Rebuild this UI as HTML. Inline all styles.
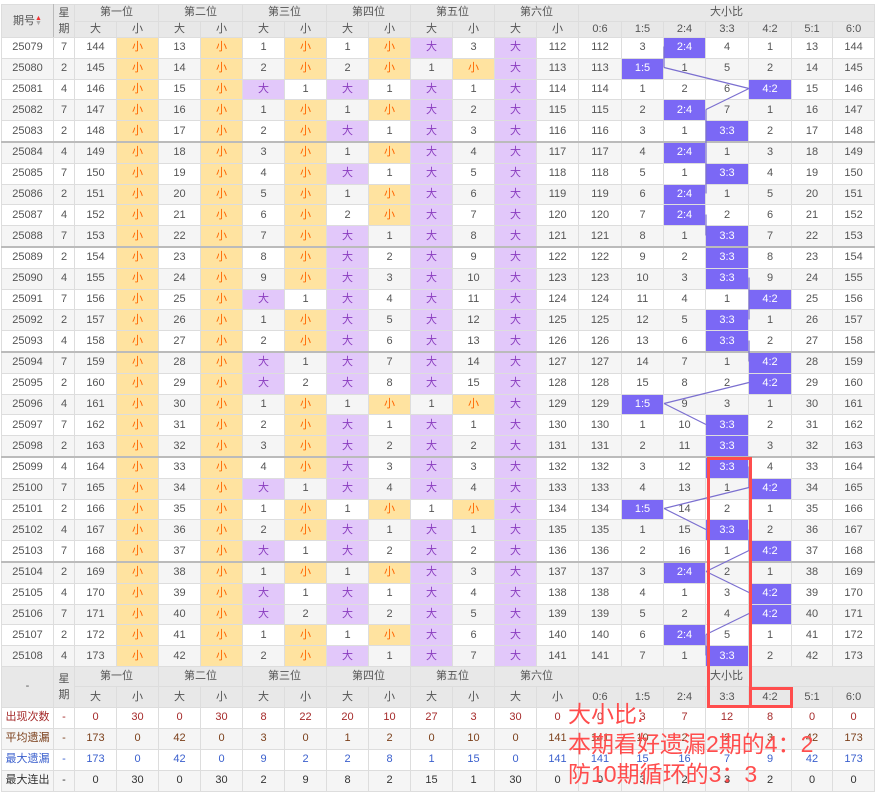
<!DOCTYPE html>
<html><head><meta charset="utf-8">
<style>
html,body{margin:0;padding:0;background:#fff;width:876px;height:794px;overflow:hidden}
body{font-family:"Liberation Sans","Noto Sans CJK SC",sans-serif;font-size:11px;color:#555;position:relative}
table{position:absolute;left:1px;top:4px;border-collapse:collapse;table-layout:fixed;width:874px}
td,th{padding:0;text-align:center;border:1px solid #ddd;height:19.8px;line-height:19px;white-space:nowrap;overflow:hidden;font-weight:normal}
th{background:#e8e8e8;color:#555;height:15px;line-height:15px}
tr.h1 th{height:14px}
tbody tr:nth-child(even) td{background:#f5f5f5}
tbody tr td{background:#fff}
tr.g td{border-top:2px solid #bbb}
td.s{background:#ffe3a0 !important;color:#f60}
td.b{background:#e2c8fa !important;color:#8a3cbf}
td.r{background:#7b68f5 !important;color:#fff}
.L{border-left:1px solid #bbb}
.ft th{height:19.5px;line-height:19px}
.st td{height:20px}
.c1{color:#a52a2a}.c2{color:#7b3f1a}.c3{color:#3a5fcd}.c4{color:#333}
.ann{position:absolute;left:568px;color:#ff4d4d;font-size:23px;line-height:30px;font-family:"Liberation Sans","Noto Sans CJK SC",sans-serif}
</style></head><body>
<table>
<colgroup><col style="width:52px"><col style="width:21px"><col style="width:42px"><col style="width:42px"><col style="width:42px"><col style="width:42px"><col style="width:42px"><col style="width:42px"><col style="width:42px"><col style="width:42px"><col style="width:42px"><col style="width:42px"><col style="width:42px"><col style="width:42px"><col style="width:43px"><col style="width:42px"><col style="width:42px"><col style="width:43px"><col style="width:43px"><col style="width:41px"><col style="width:42px"></colgroup>
<thead>
<tr class="h1"><th rowspan="2" style="border-right:1px solid #bbb">期号<span style="font-size:7px;display:inline-block;line-height:5px;vertical-align:middle"><span style="color:#e33">▲</span><br><span style="color:#aaa">▼</span></span></th><th rowspan="2" style="line-height:16px">星<br>期</th><th colspan="2" class="L">第一位</th><th colspan="2" class="L">第二位</th><th colspan="2" class="L">第三位</th><th colspan="2" class="L">第四位</th><th colspan="2" class="L">第五位</th><th colspan="2" class="L">第六位</th><th colspan="7" class="L">大小比</th></tr>
<tr><th class="L">大</th><th>小</th><th class="L">大</th><th>小</th><th class="L">大</th><th>小</th><th class="L">大</th><th>小</th><th class="L">大</th><th>小</th><th class="L">大</th><th>小</th><th class="L">0:6</th><th>1:5</th><th>2:4</th><th>3:3</th><th>4:2</th><th>5:1</th><th>6:0</th></tr>
</thead>
<tbody>
<tr><td>25079</td><td>7</td><td>144</td><td class="s">小</td><td>13</td><td class="s">小</td><td>1</td><td class="s">小</td><td>1</td><td class="s">小</td><td class="b">大</td><td>3</td><td class="b">大</td><td>112</td><td>112</td><td>3</td><td class="r">2:4</td><td>4</td><td>1</td><td>13</td><td>144</td></tr>
<tr><td>25080</td><td>2</td><td>145</td><td class="s">小</td><td>14</td><td class="s">小</td><td>2</td><td class="s">小</td><td>2</td><td class="s">小</td><td>1</td><td class="s">小</td><td class="b">大</td><td>113</td><td>113</td><td class="r">1:5</td><td>1</td><td>5</td><td>2</td><td>14</td><td>145</td></tr>
<tr><td>25081</td><td>4</td><td>146</td><td class="s">小</td><td>15</td><td class="s">小</td><td class="b">大</td><td>1</td><td class="b">大</td><td>1</td><td class="b">大</td><td>1</td><td class="b">大</td><td>114</td><td>114</td><td>1</td><td>2</td><td>6</td><td class="r">4:2</td><td>15</td><td>146</td></tr>
<tr><td>25082</td><td>7</td><td>147</td><td class="s">小</td><td>16</td><td class="s">小</td><td>1</td><td class="s">小</td><td>1</td><td class="s">小</td><td class="b">大</td><td>2</td><td class="b">大</td><td>115</td><td>115</td><td>2</td><td class="r">2:4</td><td>7</td><td>1</td><td>16</td><td>147</td></tr>
<tr><td>25083</td><td>2</td><td>148</td><td class="s">小</td><td>17</td><td class="s">小</td><td>2</td><td class="s">小</td><td class="b">大</td><td>1</td><td class="b">大</td><td>3</td><td class="b">大</td><td>116</td><td>116</td><td>3</td><td>1</td><td class="r">3:3</td><td>2</td><td>17</td><td>148</td></tr>
<tr class="g"><td>25084</td><td>4</td><td>149</td><td class="s">小</td><td>18</td><td class="s">小</td><td>3</td><td class="s">小</td><td>1</td><td class="s">小</td><td class="b">大</td><td>4</td><td class="b">大</td><td>117</td><td>117</td><td>4</td><td class="r">2:4</td><td>1</td><td>3</td><td>18</td><td>149</td></tr>
<tr><td>25085</td><td>7</td><td>150</td><td class="s">小</td><td>19</td><td class="s">小</td><td>4</td><td class="s">小</td><td class="b">大</td><td>1</td><td class="b">大</td><td>5</td><td class="b">大</td><td>118</td><td>118</td><td>5</td><td>1</td><td class="r">3:3</td><td>4</td><td>19</td><td>150</td></tr>
<tr><td>25086</td><td>2</td><td>151</td><td class="s">小</td><td>20</td><td class="s">小</td><td>5</td><td class="s">小</td><td>1</td><td class="s">小</td><td class="b">大</td><td>6</td><td class="b">大</td><td>119</td><td>119</td><td>6</td><td class="r">2:4</td><td>1</td><td>5</td><td>20</td><td>151</td></tr>
<tr><td>25087</td><td>4</td><td>152</td><td class="s">小</td><td>21</td><td class="s">小</td><td>6</td><td class="s">小</td><td>2</td><td class="s">小</td><td class="b">大</td><td>7</td><td class="b">大</td><td>120</td><td>120</td><td>7</td><td class="r">2:4</td><td>2</td><td>6</td><td>21</td><td>152</td></tr>
<tr><td>25088</td><td>7</td><td>153</td><td class="s">小</td><td>22</td><td class="s">小</td><td>7</td><td class="s">小</td><td class="b">大</td><td>1</td><td class="b">大</td><td>8</td><td class="b">大</td><td>121</td><td>121</td><td>8</td><td>1</td><td class="r">3:3</td><td>7</td><td>22</td><td>153</td></tr>
<tr class="g"><td>25089</td><td>2</td><td>154</td><td class="s">小</td><td>23</td><td class="s">小</td><td>8</td><td class="s">小</td><td class="b">大</td><td>2</td><td class="b">大</td><td>9</td><td class="b">大</td><td>122</td><td>122</td><td>9</td><td>2</td><td class="r">3:3</td><td>8</td><td>23</td><td>154</td></tr>
<tr><td>25090</td><td>4</td><td>155</td><td class="s">小</td><td>24</td><td class="s">小</td><td>9</td><td class="s">小</td><td class="b">大</td><td>3</td><td class="b">大</td><td>10</td><td class="b">大</td><td>123</td><td>123</td><td>10</td><td>3</td><td class="r">3:3</td><td>9</td><td>24</td><td>155</td></tr>
<tr><td>25091</td><td>7</td><td>156</td><td class="s">小</td><td>25</td><td class="s">小</td><td class="b">大</td><td>1</td><td class="b">大</td><td>4</td><td class="b">大</td><td>11</td><td class="b">大</td><td>124</td><td>124</td><td>11</td><td>4</td><td>1</td><td class="r">4:2</td><td>25</td><td>156</td></tr>
<tr><td>25092</td><td>2</td><td>157</td><td class="s">小</td><td>26</td><td class="s">小</td><td>1</td><td class="s">小</td><td class="b">大</td><td>5</td><td class="b">大</td><td>12</td><td class="b">大</td><td>125</td><td>125</td><td>12</td><td>5</td><td class="r">3:3</td><td>1</td><td>26</td><td>157</td></tr>
<tr><td>25093</td><td>4</td><td>158</td><td class="s">小</td><td>27</td><td class="s">小</td><td>2</td><td class="s">小</td><td class="b">大</td><td>6</td><td class="b">大</td><td>13</td><td class="b">大</td><td>126</td><td>126</td><td>13</td><td>6</td><td class="r">3:3</td><td>2</td><td>27</td><td>158</td></tr>
<tr class="g"><td>25094</td><td>7</td><td>159</td><td class="s">小</td><td>28</td><td class="s">小</td><td class="b">大</td><td>1</td><td class="b">大</td><td>7</td><td class="b">大</td><td>14</td><td class="b">大</td><td>127</td><td>127</td><td>14</td><td>7</td><td>1</td><td class="r">4:2</td><td>28</td><td>159</td></tr>
<tr><td>25095</td><td>2</td><td>160</td><td class="s">小</td><td>29</td><td class="s">小</td><td class="b">大</td><td>2</td><td class="b">大</td><td>8</td><td class="b">大</td><td>15</td><td class="b">大</td><td>128</td><td>128</td><td>15</td><td>8</td><td>2</td><td class="r">4:2</td><td>29</td><td>160</td></tr>
<tr><td>25096</td><td>4</td><td>161</td><td class="s">小</td><td>30</td><td class="s">小</td><td>1</td><td class="s">小</td><td>1</td><td class="s">小</td><td>1</td><td class="s">小</td><td class="b">大</td><td>129</td><td>129</td><td class="r">1:5</td><td>9</td><td>3</td><td>1</td><td>30</td><td>161</td></tr>
<tr><td>25097</td><td>7</td><td>162</td><td class="s">小</td><td>31</td><td class="s">小</td><td>2</td><td class="s">小</td><td class="b">大</td><td>1</td><td class="b">大</td><td>1</td><td class="b">大</td><td>130</td><td>130</td><td>1</td><td>10</td><td class="r">3:3</td><td>2</td><td>31</td><td>162</td></tr>
<tr><td>25098</td><td>2</td><td>163</td><td class="s">小</td><td>32</td><td class="s">小</td><td>3</td><td class="s">小</td><td class="b">大</td><td>2</td><td class="b">大</td><td>2</td><td class="b">大</td><td>131</td><td>131</td><td>2</td><td>11</td><td class="r">3:3</td><td>3</td><td>32</td><td>163</td></tr>
<tr class="g"><td>25099</td><td>4</td><td>164</td><td class="s">小</td><td>33</td><td class="s">小</td><td>4</td><td class="s">小</td><td class="b">大</td><td>3</td><td class="b">大</td><td>3</td><td class="b">大</td><td>132</td><td>132</td><td>3</td><td>12</td><td class="r">3:3</td><td>4</td><td>33</td><td>164</td></tr>
<tr><td>25100</td><td>7</td><td>165</td><td class="s">小</td><td>34</td><td class="s">小</td><td class="b">大</td><td>1</td><td class="b">大</td><td>4</td><td class="b">大</td><td>4</td><td class="b">大</td><td>133</td><td>133</td><td>4</td><td>13</td><td>1</td><td class="r">4:2</td><td>34</td><td>165</td></tr>
<tr><td>25101</td><td>2</td><td>166</td><td class="s">小</td><td>35</td><td class="s">小</td><td>1</td><td class="s">小</td><td>1</td><td class="s">小</td><td>1</td><td class="s">小</td><td class="b">大</td><td>134</td><td>134</td><td class="r">1:5</td><td>14</td><td>2</td><td>1</td><td>35</td><td>166</td></tr>
<tr><td>25102</td><td>4</td><td>167</td><td class="s">小</td><td>36</td><td class="s">小</td><td>2</td><td class="s">小</td><td class="b">大</td><td>1</td><td class="b">大</td><td>1</td><td class="b">大</td><td>135</td><td>135</td><td>1</td><td>15</td><td class="r">3:3</td><td>2</td><td>36</td><td>167</td></tr>
<tr><td>25103</td><td>7</td><td>168</td><td class="s">小</td><td>37</td><td class="s">小</td><td class="b">大</td><td>1</td><td class="b">大</td><td>2</td><td class="b">大</td><td>2</td><td class="b">大</td><td>136</td><td>136</td><td>2</td><td>16</td><td>1</td><td class="r">4:2</td><td>37</td><td>168</td></tr>
<tr class="g"><td>25104</td><td>2</td><td>169</td><td class="s">小</td><td>38</td><td class="s">小</td><td>1</td><td class="s">小</td><td>1</td><td class="s">小</td><td class="b">大</td><td>3</td><td class="b">大</td><td>137</td><td>137</td><td>3</td><td class="r">2:4</td><td>2</td><td>1</td><td>38</td><td>169</td></tr>
<tr><td>25105</td><td>4</td><td>170</td><td class="s">小</td><td>39</td><td class="s">小</td><td class="b">大</td><td>1</td><td class="b">大</td><td>1</td><td class="b">大</td><td>4</td><td class="b">大</td><td>138</td><td>138</td><td>4</td><td>1</td><td>3</td><td class="r">4:2</td><td>39</td><td>170</td></tr>
<tr><td>25106</td><td>7</td><td>171</td><td class="s">小</td><td>40</td><td class="s">小</td><td class="b">大</td><td>2</td><td class="b">大</td><td>2</td><td class="b">大</td><td>5</td><td class="b">大</td><td>139</td><td>139</td><td>5</td><td>2</td><td>4</td><td class="r">4:2</td><td>40</td><td>171</td></tr>
<tr><td>25107</td><td>2</td><td>172</td><td class="s">小</td><td>41</td><td class="s">小</td><td>1</td><td class="s">小</td><td>1</td><td class="s">小</td><td class="b">大</td><td>6</td><td class="b">大</td><td>140</td><td>140</td><td>6</td><td class="r">2:4</td><td>5</td><td>1</td><td>41</td><td>172</td></tr>
<tr><td>25108</td><td>4</td><td>173</td><td class="s">小</td><td>42</td><td class="s">小</td><td>2</td><td class="s">小</td><td class="b">大</td><td>1</td><td class="b">大</td><td>7</td><td class="b">大</td><td>141</td><td>141</td><td>7</td><td>1</td><td class="r">3:3</td><td>2</td><td>42</td><td>173</td></tr>
</tbody>
<tbody class="ft">
<tr><th rowspan="2">-</th><th rowspan="2" style="line-height:16px">星<br>期</th><th colspan="2" class="L">第一位</th><th colspan="2" class="L">第二位</th><th colspan="2" class="L">第三位</th><th colspan="2" class="L">第四位</th><th colspan="2" class="L">第五位</th><th colspan="2" class="L">第六位</th><th colspan="7" class="L">大小比</th></tr>
<tr><th class="L">大</th><th>小</th><th class="L">大</th><th>小</th><th class="L">大</th><th>小</th><th class="L">大</th><th>小</th><th class="L">大</th><th>小</th><th class="L">大</th><th>小</th><th class="L">0:6</th><th>1:5</th><th>2:4</th><th>3:3</th><th>4:2</th><th>5:1</th><th>6:0</th></tr>
</tbody>
<tbody class="st">
<tr class="c1"><td>出现次数</td><td>-</td><td>0</td><td>30</td><td>0</td><td>30</td><td>8</td><td>22</td><td>20</td><td>10</td><td>27</td><td>3</td><td>30</td><td>0</td><td>0</td><td>3</td><td>7</td><td>12</td><td>8</td><td>0</td><td>0</td></tr>
<tr class="c2"><td>平均遗漏</td><td>-</td><td>173</td><td>0</td><td>42</td><td>0</td><td>3</td><td>0</td><td>1</td><td>2</td><td>0</td><td>10</td><td>0</td><td>141</td><td>141</td><td>10</td><td>2</td><td>2</td><td>3</td><td>42</td><td>173</td></tr>
<tr class="c3"><td>最大遗漏</td><td>-</td><td>173</td><td>0</td><td>42</td><td>0</td><td>9</td><td>2</td><td>2</td><td>8</td><td>1</td><td>15</td><td>0</td><td>141</td><td>141</td><td>15</td><td>16</td><td>7</td><td>9</td><td>42</td><td>173</td></tr>
<tr class="c4"><td>最大连出</td><td>-</td><td>0</td><td>30</td><td>0</td><td>30</td><td>2</td><td>9</td><td>8</td><td>2</td><td>15</td><td>1</td><td>30</td><td>0</td><td>0</td><td>3</td><td>2</td><td>3</td><td>2</td><td>0</td><td>0</td></tr>
</tbody>
</table>
<svg width="876" height="794" style="position:absolute;left:0;top:0" fill="none">
<path stroke="#7b6fd0" stroke-width="1.2" d="M664,46.5L664,67.5M664,67.5L749,88.5M749,88.5L706,109.5M706,109.5L706,130.5M706,130.5L706,151.5M706,151.5L706,172.5M706,172.5L706,193.5M706,214.5L706,235.5M749,277.5L749,298.5M749,298.5L749,319.5M749,340.5L749,361.5M749,382.5L664,403.5M664,403.5L706,424.5M749,466.5L749,487.5M749,487.5L664,508.5M664,508.5L706,529.5M749,529.5L749,550.5M749,550.5L706,571.5M706,571.5L749,592.5M749,613.5L706,634.5M706,634.5L706,655.5"/>
<rect x="708.5" y="458.5" width="42" height="248" stroke="#ff4d4d" stroke-width="3"/>
<rect x="750.5" y="688.5" width="41" height="18" stroke="#ff4d4d" stroke-width="3"/>
</svg>
<div class="ann" style="top:699px">大小比:</div>
<div class="ann" style="top:729px">本期看好遗漏2期的4：2</div>
<div class="ann" style="top:759px">防10期循环的3：3</div>
</body></html>
